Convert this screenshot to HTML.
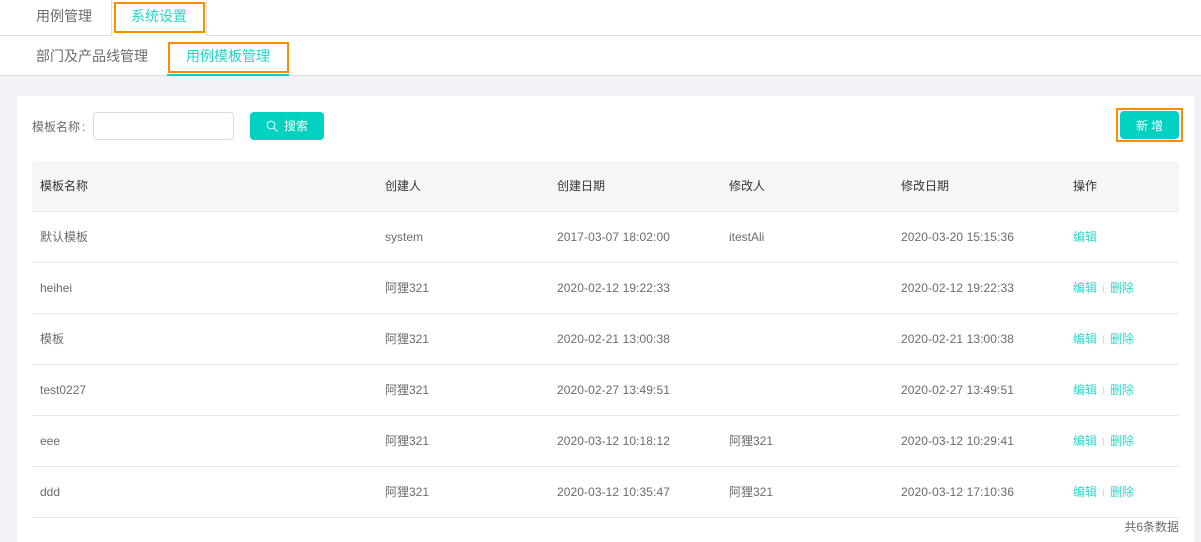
<!DOCTYPE html>
<html><head><meta charset="utf-8">
<style>
html,body{margin:0;padding:0;width:1201px;height:542px;overflow:hidden;background:#f0f2f5;font-family:"Liberation Sans","Noto Sans CJK SC",sans-serif;color:#6b6b6b;font-size:12px}
.a{position:absolute;white-space:nowrap}
.t{line-height:16px}
.h{font-weight:400;color:#333}
.c{color:#2bd9cc}
.d{letter-spacing:.08px}
.line{position:absolute;left:32px;width:1147px;height:1px;background:#e8e8e8}
.sep{position:absolute;left:1103px;width:1px;height:7px;background:#d8d8d8}
</style></head><body>
<div class="a" style="left:0;top:0;width:1201px;height:35px;background:#fff;border-bottom:1px solid #dcdfe3"></div>
<div class="a" style="left:111px;top:0;width:96px;height:36px;background:#fff;border-left:1px solid #dcdfe3;border-right:1px solid #dcdfe3;box-sizing:border-box"></div>
<div class="a" style="left:0;top:36px;width:1201px;height:39px;background:#fff;border-bottom:1px solid #dcdfe3"></div>
<div class="a" style="left:36px;top:7px;font-size:14px;line-height:18px;color:#6b6b6b">用例管理</div>
<div class="a" style="left:131px;top:7px;font-size:14px;line-height:18px;color:#1ed6c8">系统设置</div>
<div class="a" style="left:114px;top:2px;width:91px;height:31px;border:2px solid #ff8c00;box-sizing:border-box"></div>
<div class="a" style="left:36px;top:47px;font-size:14px;line-height:18px;color:#6b6b6b">部门及产品线管理</div>
<div class="a" style="left:186px;top:47px;font-size:14px;line-height:18px;color:#1ed6c8">用例模板管理</div>
<div class="a" style="left:167px;top:74px;width:122px;height:2px;background:#00d1c1"></div>
<div class="a" style="left:168px;top:42px;width:121px;height:31px;border:2px solid #ff8c00;box-sizing:border-box"></div>

<div class="a" style="left:17px;top:96px;width:1177px;height:446px;background:#fff"></div>
<div class="a t" style="left:32px;top:119px">模板名称<span style="margin-left:2px">:</span></div>
<div class="a" style="left:93px;top:112px;width:141px;height:28px;border:1px solid #dcdcdc;border-radius:4px;box-sizing:border-box;background:#fff"></div>
<div class="a" style="left:250px;top:112px;width:74px;height:28px;background:#00d1c1;border-radius:4px"></div>
<svg class="a" style="left:266px;top:120px" width="13" height="13" viewBox="0 0 13 13" fill="none" stroke="#e6fbf9" stroke-width="1"><circle cx="5" cy="5" r="3.9"/><path d="M8 8l3.6 3.6"/></svg>
<div class="a t" style="left:284px;top:118px;color:#fff">搜索</div>
<div class="a" style="left:1120px;top:111px;width:59px;height:28px;background:#00d1c1;border-radius:4px"></div>
<div class="a t" style="left:1136px;top:118px;color:#fff;letter-spacing:3px">新增</div>
<div class="a" style="left:1116px;top:108px;width:67px;height:34px;border:2px solid #ff8c00;box-sizing:border-box"></div>

<div class="a" style="left:32px;top:161px;width:1147px;height:50px;background:#f6f6f6;border-radius:4px 4px 0 0"></div>
<div class="line" style="top:211px"></div>
<div class="line" style="top:262px"></div>
<div class="line" style="top:313px"></div>
<div class="line" style="top:364px"></div>
<div class="line" style="top:415px"></div>
<div class="line" style="top:466px"></div>
<div class="line" style="top:517px"></div>

<div class="a t h" style="left:40px;top:178px">模板名称</div>
<div class="a t h" style="left:385px;top:178px">创建人</div>
<div class="a t h" style="left:557px;top:178px">创建日期</div>
<div class="a t h" style="left:729px;top:178px">修改人</div>
<div class="a t h" style="left:901px;top:178px">修改日期</div>
<div class="a t h" style="left:1073px;top:178px">操作</div>

<div class="a t" style="left:40px;top:229px">默认模板</div>
<div class="a t" style="left:385px;top:229px">system</div>
<div class="a t d" style="left:557px;top:229px">2017-03-07 18:02:00</div>
<div class="a t" style="left:729px;top:229px">itestAli</div>
<div class="a t d" style="left:901px;top:229px">2020-03-20 15:15:36</div>
<div class="a t c" style="left:1073px;top:229px">编辑</div>

<div class="a t" style="left:40px;top:280px">heihei</div>
<div class="a t" style="left:385px;top:280px">阿狸321</div>
<div class="a t d" style="left:557px;top:280px">2020-02-12 19:22:33</div>
<div class="a t d" style="left:901px;top:280px">2020-02-12 19:22:33</div>
<div class="a t c" style="left:1073px;top:280px">编辑</div><div class="sep" style="top:285px"></div><div class="a t c" style="left:1110px;top:280px">删除</div>

<div class="a t" style="left:40px;top:331px">模板</div>
<div class="a t" style="left:385px;top:331px">阿狸321</div>
<div class="a t d" style="left:557px;top:331px">2020-02-21 13:00:38</div>
<div class="a t d" style="left:901px;top:331px">2020-02-21 13:00:38</div>
<div class="a t c" style="left:1073px;top:331px">编辑</div><div class="sep" style="top:336px"></div><div class="a t c" style="left:1110px;top:331px">删除</div>

<div class="a t" style="left:40px;top:382px">test0227</div>
<div class="a t" style="left:385px;top:382px">阿狸321</div>
<div class="a t d" style="left:557px;top:382px">2020-02-27 13:49:51</div>
<div class="a t d" style="left:901px;top:382px">2020-02-27 13:49:51</div>
<div class="a t c" style="left:1073px;top:382px">编辑</div><div class="sep" style="top:387px"></div><div class="a t c" style="left:1110px;top:382px">删除</div>

<div class="a t" style="left:40px;top:433px">eee</div>
<div class="a t" style="left:385px;top:433px">阿狸321</div>
<div class="a t d" style="left:557px;top:433px">2020-03-12 10:18:12</div>
<div class="a t" style="left:729px;top:433px">阿狸321</div>
<div class="a t d" style="left:901px;top:433px">2020-03-12 10:29:41</div>
<div class="a t c" style="left:1073px;top:433px">编辑</div><div class="sep" style="top:438px"></div><div class="a t c" style="left:1110px;top:433px">删除</div>

<div class="a t" style="left:40px;top:484px">ddd</div>
<div class="a t" style="left:385px;top:484px">阿狸321</div>
<div class="a t d" style="left:557px;top:484px">2020-03-12 10:35:47</div>
<div class="a t" style="left:729px;top:484px">阿狸321</div>
<div class="a t d" style="left:901px;top:484px">2020-03-12 17:10:36</div>
<div class="a t c" style="left:1073px;top:484px">编辑</div><div class="sep" style="top:489px"></div><div class="a t c" style="left:1110px;top:484px">删除</div>

<div class="a t" style="right:22px;top:519px">共6条数据</div>
</body></html>
